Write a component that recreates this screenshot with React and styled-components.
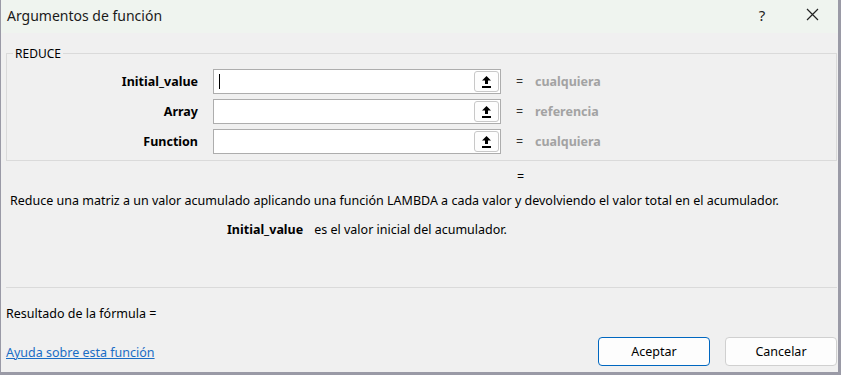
import React from 'react'
import styled, { createGlobalStyle } from 'styled-components'

const GlobalStyle = createGlobalStyle`
  html, body { margin: 0; padding: 0; background: #f0f0f0; }
  body { font-family: "Noto Sans", "Open Sans", sans-serif; }
`

const args = [
  { name: 'Initial_value', value: 'cualquiera', focused: true },
  { name: 'Array', value: 'referencia' },
  { name: 'Function', value: 'cualquiera' },
]

function UploadIcon() {
  return (
    <svg width="11" height="13" viewBox="0 0 11 13">
      <path d="M5.5 1 L10 5.5 L7 5.5 L7 9 L4 9 L4 5.5 L1 5.5 Z" fill="#000" />
      <rect x="1" y="11" width="9" height="2" fill="#000" />
    </svg>
  )
}

function App() {
  return (
    <>
      <GlobalStyle />
      <Window>
        <TitleBar>
          <Title>Argumentos de función</Title>
          <TitleButtons>
            <Help>?</Help>
            <CloseBtn>
              <svg width="13" height="13" viewBox="0 0 13 13">
                <path d="M1 1 L12 12 M12 1 L1 12" stroke="#222" strokeWidth="1.2" />
              </svg>
            </CloseBtn>
          </TitleButtons>
        </TitleBar>
        <Body>
          <Group>
            <Legend>REDUCE</Legend>
            {args.map((a) => (
              <ArgRow key={a.name}>
                <ArgLabel>{a.name}</ArgLabel>
                <InputBox>
                  <Field>{a.focused && <Caret />}</Field>
                  <RefButton><UploadIcon /></RefButton>
                </InputBox>
                <Eq>=</Eq>
                <ArgValue>{a.value}</ArgValue>
              </ArgRow>
            ))}
          </Group>
          <ResultEq>=</ResultEq>
          <Description>
            Reduce una matriz a un valor acumulado aplicando una función LAMBDA a cada valor y devolviendo el valor total en el acumulador.
          </Description>
          <ArgHelp>
            <b>Initial_value</b>
            <span>es el valor inicial del acumulador.</span>
          </ArgHelp>
          <Separator />
          <Result>Resultado de la fórmula =</Result>
          <Footer>
            <HelpLink href="#">Ayuda sobre esta función</HelpLink>
            <Buttons>
              <Button primary>Aceptar</Button>
              <Button>Cancelar</Button>
            </Buttons>
          </Footer>
        </Body>
      </Window>
    </>
  )
}

const Window = styled.div`
  width: 841px;
  height: 375px;
  box-sizing: border-box;
  border-left: 1px solid #9a9aa6;
  border-right: 3px solid #9a9aa6;
  border-bottom: 3px solid #9a9aa6;
  background: #f0f0f0;
  display: flex;
  flex-direction: column;
  color: #000;
  font-size: 12.5px;
`

const TitleBar = styled.div`
  height: 33px;
  flex: none;
  background: #eff4ef;
  display: flex;
  align-items: center;
  justify-content: space-between;
  padding-left: 6px;
`

const Title = styled.div`
  font-size: 14px;
  color: #1a1a1a;
  margin-top: -2px;
`

const TitleButtons = styled.div`
  display: flex;
  align-items: center;
  height: 100%;
  padding-right: 3px;
`

const Help = styled.div`
  width: 46px;
  text-align: center;
  font-size: 15px;
  color: #222;
  margin-top: -4px;
  padding-right: 4px;
`

const CloseBtn = styled.div`
  width: 46px;
  display: flex;
  justify-content: center;
  align-items: center;
  margin-top: -4px;
`

const Body = styled.div`
  flex: 1;
  display: flex;
  flex-direction: column;
  padding: 0 0 0 5px;
`

const Group = styled.fieldset`
  margin: 12px 0 0 0;
  padding: 7px 0 6px 0;
  border: 1px solid #dadada;
  width: 831px;
  box-sizing: border-box;
  display: flex;
  flex-direction: column;
  gap: 5px;
`

const Legend = styled.legend`
  padding: 0 2px;
  margin-left: 6px;
  font-size: 12px;
  color: #000;
`

const ArgRow = styled.div`
  display: grid;
  grid-template-columns: 194px 288px 24px auto;
  align-items: center;
  height: 25px;
  column-gap: 12px;
`

const ArgLabel = styled.div`
  text-align: right;
  font-weight: 700;
  padding-right: 3px;
`

const InputBox = styled.div`
  display: flex;
  align-items: center;
  height: 25px;
  background: #fff;
  border: 1px solid #adadad;
  box-sizing: border-box;
  padding-right: 1px;
`

const Field = styled.div`
  flex: 1;
  height: 100%;
  display: flex;
  align-items: center;
  padding-left: 5px;
`

const Caret = styled.div`
  width: 1px;
  height: 15px;
  background: #000;
`

const RefButton = styled.div`
  width: 25px;
  height: 21px;
  box-sizing: border-box;
  border: 1px solid #c8c8c8;
  border-radius: 3px;
  background: #fdfdfd;
  display: flex;
  align-items: center;
  justify-content: center;
`

const Eq = styled.div`
  color: #333;
  padding-left: 3px;
`

const ArgValue = styled.div`
  color: #a3a3a3;
  font-weight: 700;
  margin-left: -14px;
`

const ResultEq = styled.div`
  padding-left: 511px;
  margin-top: 7px;
  height: 18px;
`

const Description = styled.div`
  padding-left: 4px;
  margin-top: 6px;
`

const ArgHelp = styled.div`
  padding-left: 221px;
  margin-top: 12px;
  display: flex;
  gap: 11px;
  b { font-weight: 700; }
`

const Separator = styled.div`
  width: 831px;
  height: 1px;
  background: #dadada;
  margin-top: 49px;
`

const Result = styled.div`
  margin-top: 17px;
`

const Footer = styled.div`
  display: flex;
  justify-content: space-between;
  align-items: center;
  margin-top: 15px;
  width: 831px;
`

const HelpLink = styled.a`
  color: #1a6dc5;
  text-decoration: underline;
  margin-top: 2px;
`

const Buttons = styled.div`
  display: flex;
  gap: 15px;
`

const Button = styled.button`
  width: 112px;
  height: 29px;
  box-sizing: border-box;
  border-radius: 4px;
  background: #fdfdfd;
  border: 1px solid ${(p) => (p.primary ? '#0067c0' : '#d0d0d0')};
  font-family: inherit;
  font-size: 12.5px;
  color: #000;
`

export default App
